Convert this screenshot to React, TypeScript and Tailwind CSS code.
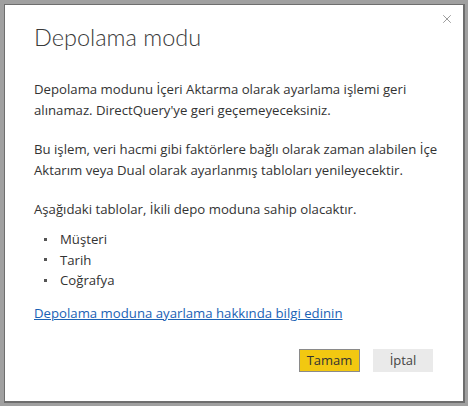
import { X } from "lucide-react";

const tables = ["Müşteri", "Tarih", "Coğrafya"];

export default function App() {
  return (
    <div className="w-[468px] h-[406px] bg-[#a0a0a0] pl-[4px] pt-[4px]" style={{ fontFamily: '"Open Sans", "Noto Sans", sans-serif' }}>
      <div className="relative w-[461px] h-[399px] bg-white border-l border-t border-r-2 border-b-2 border-[#6e6e6e] text-[#333333]">
        <button className="absolute right-[5px] top-[3px] p-1 text-[#777777]">
          <X size={14} strokeWidth={1.25} />
        </button>

        <div className="pl-[29px] pr-[20px] pt-[16px]">
          <h1 className="text-[23.5px] font-light leading-[33px] text-[#3a3a3a]" style={{ fontFamily: 'Lato, "Open Sans", sans-serif' }}>
            Depolama modu
          </h1>

          <div className="mt-[25px] text-[13.2px] leading-[21px]">
            <p>
              Depolama modunu İçeri Aktarma olarak ayarlama işlemi geri alınamaz. DirectQuery'ye geri geçemeyeceksiniz.
            </p>
            <p className="mt-[18px]">
              Bu işlem, veri hacmi gibi faktörlere bağlı olarak zaman alabilen İçe Aktarım veya Dual olarak ayarlanmış tabloları yenileyecektir.
            </p>
            <p className="mt-[18px]">Aşağıdaki tablolar, İkili depo moduna sahip olacaktır.</p>
            <ul className="mt-[9px] pl-[10px] leading-[20.5px]">
              {tables.map((t) => (
                <li key={t} className="flex items-center">
                  <span className="w-[3px] h-[3px] bg-[#555555] mr-[13px]" />
                  {t}
                </li>
              ))}
            </ul>
            <a href="#" className="block mt-[12px] text-[#1a62b5] underline">
              Depolama moduna ayarlama hakkında bilgi edinin
            </a>
          </div>
        </div>

        <div className="absolute right-[30px] top-[344px] flex gap-[13px] text-[13px] font-normal">
          <button className="w-[61px] h-[23px] bg-[#f2c811] border border-[#8a8a8a] leading-none text-[#333333]">Tamam</button>
          <button className="w-[60px] h-[23px] bg-[#eaeaea] leading-none text-[#444444]">İptal</button>
        </div>
      </div>
    </div>
  );
}
